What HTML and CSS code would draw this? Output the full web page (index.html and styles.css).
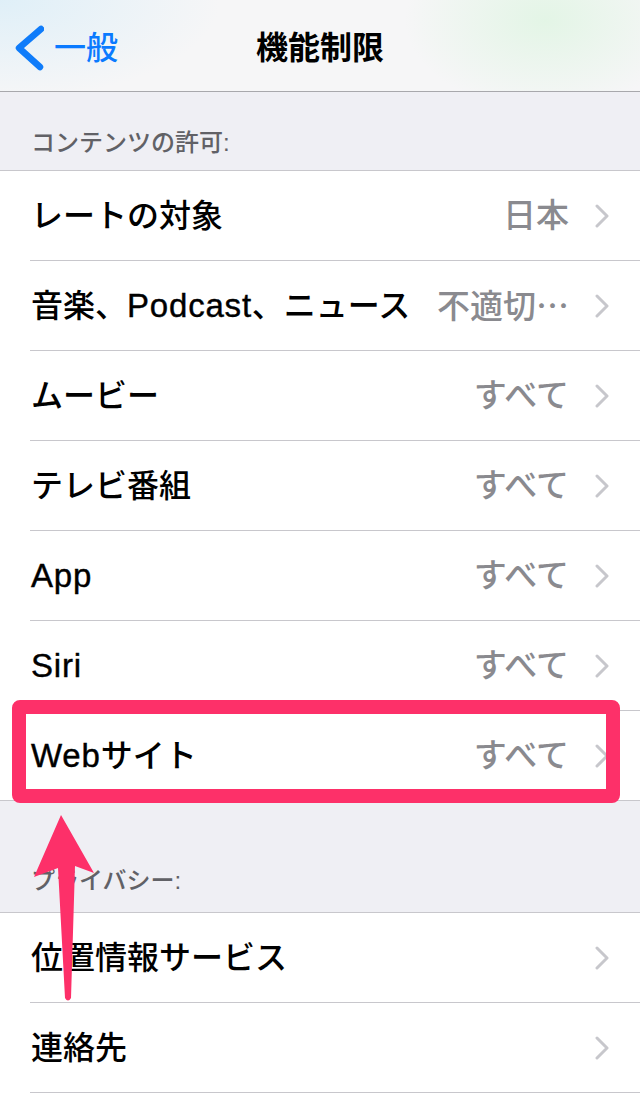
FILE: index.html
```html
<!DOCTYPE html>
<html lang="ja">
<head>
<meta charset="utf-8">
<title>機能制限</title>
<link rel="stylesheet" href="styles.css">
</head>
<body>
<div class="screen">
  <header class="nav">
    <div class="back">
      <svg class="back-chev" width="30" height="48" viewBox="0 0 30 48"><path d="M27 5 L5 24 L26 43" fill="none" stroke="#0f7cfa" stroke-width="6.5" stroke-linecap="round" stroke-linejoin="round"/></svg>
      <span class="back-text">一般</span>
    </div>
    <div class="title">機能制限</div>
    <div class="spacer"></div>
  </header>

  <div class="sec-header first">コンテンツの許可:</div>
  <div class="group">
    <div class="row"><div class="row-inner"><span class="label">レートの対象</span><span class="value">日本</span><svg class="chev" width="14" height="24" viewBox="0 0 14 24"><path d="M2 2 L12 12 L2 22" fill="none" stroke="#c7c7cc" stroke-width="3" stroke-linecap="round" stroke-linejoin="round"/></svg></div></div>
    <div class="row"><div class="row-inner"><span class="label">音楽、<span class="lat">Podcast</span>、ニュース</span><span class="value">不適切<span class="ell">…</span></span><svg class="chev" width="14" height="24" viewBox="0 0 14 24"><path d="M2 2 L12 12 L2 22" fill="none" stroke="#c7c7cc" stroke-width="3" stroke-linecap="round" stroke-linejoin="round"/></svg></div></div>
    <div class="row"><div class="row-inner"><span class="label">ムービー</span><span class="value">すべて</span><svg class="chev" width="14" height="24" viewBox="0 0 14 24"><path d="M2 2 L12 12 L2 22" fill="none" stroke="#c7c7cc" stroke-width="3" stroke-linecap="round" stroke-linejoin="round"/></svg></div></div>
    <div class="row"><div class="row-inner"><span class="label">テレビ番組</span><span class="value">すべて</span><svg class="chev" width="14" height="24" viewBox="0 0 14 24"><path d="M2 2 L12 12 L2 22" fill="none" stroke="#c7c7cc" stroke-width="3" stroke-linecap="round" stroke-linejoin="round"/></svg></div></div>
    <div class="row"><div class="row-inner"><span class="label"><span class="lat">App</span></span><span class="value">すべて</span><svg class="chev" width="14" height="24" viewBox="0 0 14 24"><path d="M2 2 L12 12 L2 22" fill="none" stroke="#c7c7cc" stroke-width="3" stroke-linecap="round" stroke-linejoin="round"/></svg></div></div>
    <div class="row"><div class="row-inner"><span class="label"><span class="lat">Siri</span></span><span class="value">すべて</span><svg class="chev" width="14" height="24" viewBox="0 0 14 24"><path d="M2 2 L12 12 L2 22" fill="none" stroke="#c7c7cc" stroke-width="3" stroke-linecap="round" stroke-linejoin="round"/></svg></div></div>
    <div class="row last"><div class="row-inner"><span class="label"><span class="lat">Web</span>サイト</span><span class="value">すべて</span><svg class="chev" width="14" height="24" viewBox="0 0 14 24"><path d="M2 2 L12 12 L2 22" fill="none" stroke="#c7c7cc" stroke-width="3" stroke-linecap="round" stroke-linejoin="round"/></svg></div></div>
  </div>

  <div class="sec-header second">プライバシー:</div>
  <div class="group open">
    <div class="row"><div class="row-inner"><span class="label">位置情報サービス</span><svg class="chev" width="14" height="24" viewBox="0 0 14 24"><path d="M2 2 L12 12 L2 22" fill="none" stroke="#c7c7cc" stroke-width="3" stroke-linecap="round" stroke-linejoin="round"/></svg></div></div>
    <div class="row"><div class="row-inner"><span class="label">連絡先</span><svg class="chev" width="14" height="24" viewBox="0 0 14 24"><path d="M2 2 L12 12 L2 22" fill="none" stroke="#c7c7cc" stroke-width="3" stroke-linecap="round" stroke-linejoin="round"/></svg></div></div>
    <div class="row-tail"></div>
  </div>

  <div class="highlight"></div>
  <svg class="arrow" width="110" height="210" viewBox="0 0 110 210">
    <path d="M61 15 L94 73 L75 66 L71 198 Q68 203 65 198 L58 68 L34 77 Z" fill="#fd3069"/>
  </svg>
</div>
</body>
</html>
```
FILE: styles.css
```css
html, body {
  margin: 0;
  padding: 0;
  overflow: hidden;
}
body {
  width: 640px;
  height: 1100px;
  background: #efeff4;
  font-family: "Liberation Sans", "Noto Sans CJK JP", sans-serif;
  -webkit-font-smoothing: antialiased;
}
.screen {
  position: relative;
  width: 640px;
  height: 1100px;
  overflow: hidden;
}
.nav {
  height: 92px;
  box-sizing: border-box;
  border-bottom: 1px solid #a8a8ac;
  display: grid;
  grid-template-columns: 1fr auto 1fr;
  align-items: center;
  background:
    radial-gradient(ellipse 140px 90px at 545px 20px, rgba(225, 245, 228, 0.9), rgba(225, 245, 228, 0) 100%),
    radial-gradient(ellipse 220px 100px at 0px 0px, rgba(222, 239, 248, 0.95), rgba(222, 239, 248, 0) 100%),
    #f6f6f7;
}
.back {
  display: flex;
  align-items: center;
  padding-left: 14px;
  padding-top: 4px;
  gap: 10px;
}
.back-chev {
  display: block;
}
.back-text {
  color: #0a7aff;
  font-size: 32px;
  line-height: 40px;
  font-weight: 500;
}
.title {
  font-size: 32px;
  font-weight: 700;
  line-height: 40px;
  color: #000;
  padding-top: 4px;
}
.sec-header {
  display: flex;
  align-items: flex-end;
  box-sizing: border-box;
  padding: 0 30px 13px 31px;
  font-size: 24px;
  line-height: 29px;
  color: #616166;
  font-weight: 500;
}
.sec-header.first {
  height: 78px;
}
.sec-header.second {
  height: 111px;
  padding-bottom: 17px;
}
.group {
  background: #fff;
  border-top: 1px solid #c8c7cc;
  border-bottom: 1px solid #c8c7cc;
}
.group.open {
  border-bottom: none;
}
.row {
  padding-left: 30px;
}
.row-inner {
  height: 90px;
  box-sizing: border-box;
  border-bottom: 1px solid #c8c7cc;
  display: flex;
  align-items: center;
  padding-right: 31px;
}
.row.last .row-inner {
  border-bottom: none;
  height: 89px;
}
.row-tail {
  height: 20px;
}
.label {
  flex: 1;
  font-size: 32px;
  line-height: 40px;
  color: #000;
  font-weight: 500;
  white-space: nowrap;
  padding-left: 1px;
}
.lat {
  font-size: 33px;
  letter-spacing: 0.8px;
  -webkit-text-stroke: 0.4px #000;
}
.value {
  font-size: 33px;
  line-height: 40px;
  color: #8a8a8f;
  font-weight: 500;
  white-space: nowrap;
}
.ell {
  font-family: "Noto Sans CJK JP", sans-serif;
}
.chev {
  display: block;
  margin-left: 26px;
  flex: none;
}
.highlight {
  position: absolute;
  left: 12px;
  top: 700px;
  width: 608px;
  height: 103px;
  box-sizing: border-box;
  border: 14px solid #fd3069;
  border-radius: 8px;
}
.arrow {
  position: absolute;
  left: 0;
  top: 800px;
}
```
